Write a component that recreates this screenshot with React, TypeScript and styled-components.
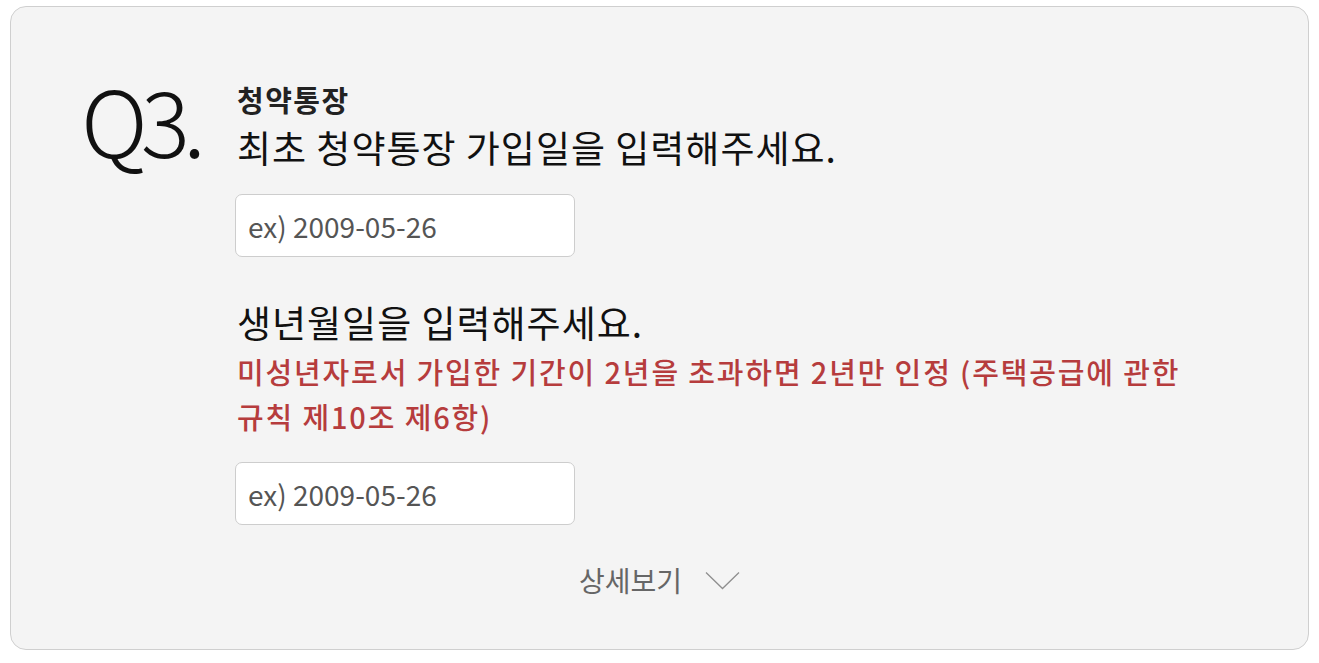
import React from "react";
import styled, { createGlobalStyle } from "styled-components";

const GlobalStyle = createGlobalStyle`
  body {
    margin: 0;
    background: #fff;
    font-family: "Noto Sans CJK KR", "Noto Sans", sans-serif;
  }
`;

const Card = styled.section`
  box-sizing: border-box;
  margin: 6px 10px 0 10px;
  width: 1299px;
  height: 644px;
  background: #f4f4f4;
  border: 1px solid #cfcfcf;
  border-radius: 16px;
  padding-top: 62px;
  display: flex;
  flex-direction: column;
`;

const Question = styled.div`
  display: flex;
  align-items: flex-start;
  padding-left: 70px;
`;

const Number = styled.div`
  width: 156px;
  flex: none;
  padding-top: 3px;
  font-size: 92px;
  font-weight: 300;
  line-height: 1;
  letter-spacing: -7px;
  color: #111;
`;

const Body = styled.div`
  display: flex;
  flex-direction: column;
  padding-top: 12px;
`;

const Category = styled.div`
  font-size: 29px;
  font-weight: 700;
  line-height: 36px;
  letter-spacing: 1.5px;
  color: #222;
`;

const Prompt = styled.div<{ $gap?: number }>`
  font-size: 37px;
  font-weight: 400;
  line-height: 48px;
  letter-spacing: 1px;
  color: #111;
  margin-top: ${(p) => p.$gap ?? 0}px;
`;

const Notice = styled.div`
  font-size: 29px;
  font-weight: 500;
  line-height: 45px;
  letter-spacing: 1.85px;
  word-break: keep-all;
  color: #b63c3d;
  max-width: 970px;
  margin-top: 3px;
`;

const DateInput = styled.input`
  box-sizing: border-box;
  width: 340px;
  height: 63px;
  margin: 23px 0 0 -2px;
  padding: 0 12px;
  background: #fff;
  border: 1px solid #cdcdcd;
  border-radius: 7px;
  font-family: "Noto Sans CJK KR", "Noto Sans", sans-serif;
  font-size: 28px;
  color: #333;
  outline: none;
  &::placeholder {
    color: #555;
  }
`;

const More = styled.button`
  align-self: center;
  margin-top: 37px;
  display: flex;
  align-items: center;
  gap: 23px;
  background: none;
  border: 0;
  padding: 0;
  font-family: "Noto Sans CJK KR", "Noto Sans", sans-serif;
  font-size: 28px;
  line-height: 36px;
  color: #666;
  cursor: pointer;
`;

const Chevron = () => (
  <svg width="35" height="19" viewBox="0 0 35 19" fill="none">
    <polyline points="1,1.5 17.5,17.5 34,1.5" stroke="#8f8f8f" strokeWidth="1.3" />
  </svg>
);

export default function App() {
  return (
    <>
      <GlobalStyle />
      <Card>
        <Question>
          <Number>Q3.</Number>
          <Body>
            <Category>청약통장</Category>
            <Prompt $gap={6}>최초 청약통장 가입일을 입력해주세요.</Prompt>
            <DateInput placeholder="ex) 2009-05-26" />
            <Prompt $gap={41}>생년월일을 입력해주세요.</Prompt>
            <Notice>
              미성년자로서 가입한 기간이 2년을 초과하면 2년만 인정 (주택공급에 관한 규칙 제10조 제6항)
            </Notice>
            <DateInput placeholder="ex) 2009-05-26" />
          </Body>
        </Question>
        <More type="button">
          상세보기
          <Chevron />
        </More>
      </Card>
    </>
  );
}
